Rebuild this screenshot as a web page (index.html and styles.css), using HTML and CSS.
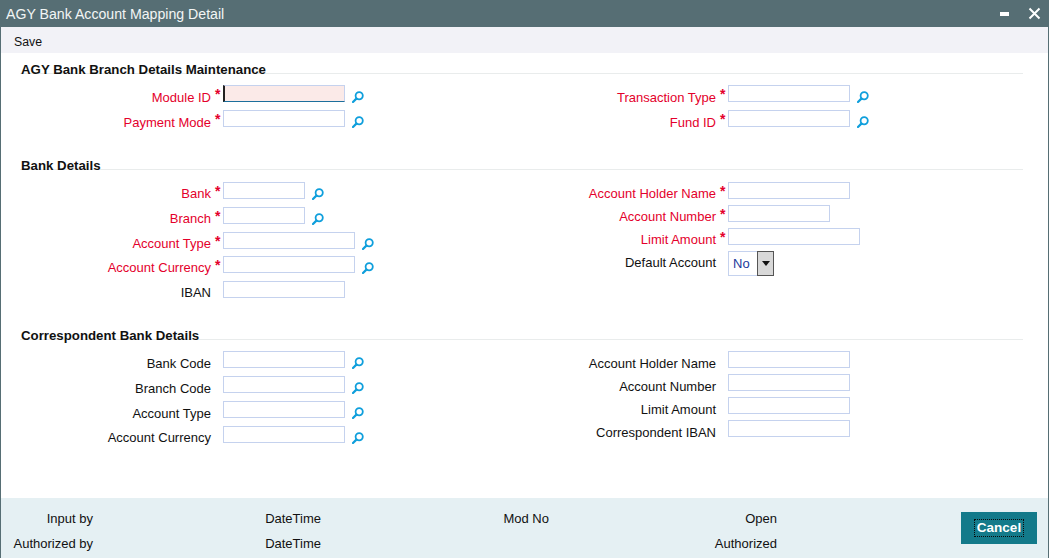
FILE: index.html
```html
<!DOCTYPE html>
<html lang="en">
<head>
<meta charset="utf-8">
<title>AGY Bank Account Mapping Detail</title>
<link rel="stylesheet" href="styles.css">
</head>
<body>
<svg class="defs" width="0" height="0" aria-hidden="true"><symbol id="lens" viewBox="0 0 12 12"><circle cx="7.2" cy="4.8" r="3.6" fill="none" stroke="#0f9fdc" stroke-width="1.8"/><path d="M4.4 7.6 1 11" fill="none" stroke="#0f9fdc" stroke-width="2.2" stroke-linecap="round"/></symbol></svg>
<div class="window">
  <header class="titlebar">
    <span class="title">AGY Bank Account Mapping Detail</span>
    <span class="winbtns">
      <svg class="winicon" width="12" height="12" viewBox="0 0 12 12"><rect x="2" y="4" width="9" height="4" fill="#fff"/></svg>
      <svg class="winicon" width="13" height="13" viewBox="0 0 13 13"><path d="M1.5 1.5 11.5 11.5M11.5 1.5 1.5 11.5" stroke="#fff" stroke-width="2" fill="none"/></svg>
    </span>
  </header>
  <nav class="toolbar"><span>Save</span></nav>
  <main class="content">
    <section class="section s1">
      <h2 class="heading"><span>AGY Bank Branch Details Maintenance</span></h2>
      <div class="columns">
        <div class="col wide">
          <div class="field req"><label>Module ID</label><i>*</i><span class="input focus w122"></span><svg class="lens"><use href="#lens"/></svg></div>
          <div class="field req"><label>Payment Mode</label><i>*</i><span class="input w122"></span><svg class="lens"><use href="#lens"/></svg></div>
        </div>
        <div class="col wide">
          <div class="field req"><label>Transaction Type</label><i>*</i><span class="input w122"></span><svg class="lens"><use href="#lens"/></svg></div>
          <div class="field req"><label>Fund ID</label><i>*</i><span class="input w122"></span><svg class="lens"><use href="#lens"/></svg></div>
        </div>
      </div>
    </section>
    <section class="section s2">
      <h2 class="heading"><span>Bank Details</span></h2>
      <div class="columns">
        <div class="col wide">
          <div class="field req"><label>Bank</label><i>*</i><span class="input w82"></span><svg class="lens"><use href="#lens"/></svg></div>
          <div class="field req"><label>Branch</label><i>*</i><span class="input w82"></span><svg class="lens"><use href="#lens"/></svg></div>
          <div class="field req"><label>Account Type</label><i>*</i><span class="input w132"></span><svg class="lens"><use href="#lens"/></svg></div>
          <div class="field req"><label>Account Currency</label><i>*</i><span class="input w132"></span><svg class="lens"><use href="#lens"/></svg></div>
          <div class="field"><label>IBAN</label><i></i><span class="input w122"></span></div>
        </div>
        <div class="col">
          <div class="field req"><label>Account Holder Name</label><i>*</i><span class="input w122"></span></div>
          <div class="field req"><label>Account Number</label><i>*</i><span class="input w102"></span></div>
          <div class="field req"><label>Limit Amount</label><i>*</i><span class="input w132"></span></div>
          <div class="field"><label>Default Account</label><i></i>
            <span class="select"><span class="sel-value">No</span><span class="sel-btn"><svg width="8" height="5" viewBox="0 0 8 5"><path d="M0 0h8L4 5z" fill="#111"/></svg></span></span>
          </div>
        </div>
      </div>
    </section>
    <section class="section s3">
      <h2 class="heading"><span>Correspondent Bank Details</span></h2>
      <div class="columns">
        <div class="col wide">
          <div class="field"><label>Bank Code</label><i></i><span class="input w122"></span><svg class="lens"><use href="#lens"/></svg></div>
          <div class="field"><label>Branch Code</label><i></i><span class="input w122"></span><svg class="lens"><use href="#lens"/></svg></div>
          <div class="field"><label>Account Type</label><i></i><span class="input w122"></span><svg class="lens"><use href="#lens"/></svg></div>
          <div class="field"><label>Account Currency</label><i></i><span class="input w122"></span><svg class="lens"><use href="#lens"/></svg></div>
        </div>
        <div class="col">
          <div class="field"><label>Account Holder Name</label><i></i><span class="input w122"></span></div>
          <div class="field"><label>Account Number</label><i></i><span class="input w122"></span></div>
          <div class="field"><label>Limit Amount</label><i></i><span class="input w122"></span></div>
          <div class="field"><label>Correspondent IBAN</label><i></i><span class="input w122"></span></div>
        </div>
      </div>
    </section>
  </main>
  <footer class="footer">
    <div class="audit">
      <span>Input by</span><span>DateTime</span><span>Mod No</span><span>Open</span>
      <span>Authorized by</span><span>DateTime</span><span></span><span>Authorized</span>
    </div>
    <button class="cancel" type="button"><span>Cancel</span></button>
  </footer>
</div>
</body>
</html>
```
FILE: styles.css
```css
* { box-sizing: border-box; }
html, body { margin: 0; padding: 0; }
body { width: 1049px; height: 558px; overflow: hidden; font-family: "Liberation Sans", Arial, sans-serif; font-size: 13px; color: #111; background: #fff; }
.defs { position: absolute; }
.window { width: 1049px; height: 558px; display: flex; flex-direction: column; border: solid #566e74; border-width: 0 1px 0 1px; }
.titlebar { height: 27px; margin: 0 -1px; background: #566e74; color: #f2f5f5; display: flex; align-items: center; justify-content: space-between; padding: 0 8px 0 6px; flex: none; }
.title { font-size: 14.15px; }
.winbtns { display: flex; align-items: center; gap: 18px; }
.winicon { display: block; }
.toolbar { height: 26px; flex: none; background: #f2f2f7; padding: 8px 0 0 13px; font-size: 12.3px; line-height: 14px; }
.content { flex: 1; min-height: 0; }
.section { display: flex; flex-direction: column; }
.s1 { padding-top: 10px; height: 106px; }
.s2 { height: 170px; }
.heading { margin: 0 25px 0 19px; padding: 0 0 0 1px; font-size: 13.25px; line-height: 13px; font-weight: bold; color: #111; height: 11px; border-bottom: 1px solid #e9ecec; }
.columns { display: grid; grid-template-columns: 505px 1fr; margin-top: 11px; }
.s2 .columns { margin-top: 12px; }
.col { display: flex; flex-direction: column; gap: 6px; }
.col.wide { gap: 8px; }
.s2 .wide .field:nth-child(4), .s3 .wide .field:nth-child(4) label { margin-top: -1px; }
.field { display: flex; align-items: flex-start; height: 17px; }
.field label { width: 210px; text-align: right; line-height: 17px; padding-top: 4px; white-space: nowrap; }
.s2 .field label { padding-top: 3px; }
.field i { width: 12px; font-style: normal; font-weight: bold; color: #e4002b; font-size: 14px; line-height: 17px; padding: 1px 0 0 4px; }
.req label { color: #e4002b; }
.input { display: block; height: 17px; background: #fff; border: 1px solid #c5d2ee; }
.focus { background: #fbeae8; border-bottom: 1px solid #1c6f9c; border-left: 2px solid #222; }
.w82 { width: 82px; }
.w102 { width: 102px; }
.w122 { width: 122px; }
.w132 { width: 132px; }
.lens { width: 12px; height: 12px; margin: 6px 0 0 7px; flex: none; }
.select { display: flex; width: 46px; height: 25px; border: 1px solid #c5d2ee; border-right: 0; }
.sel-value { flex: 1; padding: 4px 0 0 4px; line-height: 15px; color: #1a3a9c; }
.sel-btn { width: 17px; height: 25px; margin-top: -1px; background: #d8d8d8; border: 1px solid #555; display: flex; align-items: center; justify-content: center; }
.footer { height: 60px; flex: none; background: #e5f0f3; display: flex; align-items: flex-start; justify-content: space-between; padding: 14px 11px 0 0; }
.audit { display: grid; grid-template-columns: 92px 228px 228px 228px; grid-auto-rows: 25px; text-align: right; line-height: 14px; }
.cancel { width: 76px; height: 32px; background: #137a8a; border: 0; color: #fff; font: bold 13.5px "Liberation Sans", Arial, sans-serif; padding: 0; display: flex; align-items: center; justify-content: center; }
.cancel span { display: block; width: 50px; height: 18px; line-height: 16px; border: 1px dotted #0b0b0b; text-align: center; }
```
